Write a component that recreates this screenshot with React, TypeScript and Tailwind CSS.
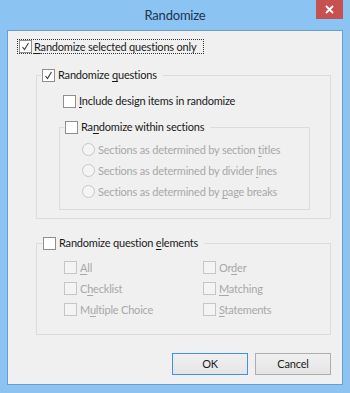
import React from "react";

const font = { fontFamily: 'Lato, "Noto Sans", sans-serif' };

const Check = () => (
  <svg width="9" height="9" viewBox="0 0 9 9" className="block">
    <path d="M1.5 5 L3.5 7.5 L7.5 1" fill="none" stroke="#3a3a3a" strokeWidth="1.1" />
  </svg>
);

const Box = ({ checked = false, disabled = false }: { checked?: boolean; disabled?: boolean }) => (
  <span
    className={
      disabled
        ? "flex h-[13px] w-[13px] shrink-0 items-center justify-center border border-[#c6c6c6] bg-[#f4f4f4]"
        : "flex h-[13px] w-[13px] shrink-0 items-center justify-center border border-[#8f8f8f] bg-white"
    }
  >
    {checked && <Check />}
  </span>
);

const Radio = () => (
  <span className="h-[13px] w-[13px] shrink-0 rounded-full border border-[#c6c6c6] bg-[#f4f4f4]" />
);

// label text with one underlined mnemonic letter
const Label = ({ pre, key1, post, disabled }: { pre: string; key1: string; post: string; disabled?: boolean }) => (
  <span className={disabled ? "whitespace-nowrap text-[#a8a8a8]" : "whitespace-nowrap text-[#1a1a1a]"}>
    {pre}
    <span className="underline underline-offset-2">{key1}</span>
    {post}
  </span>
);

const Row = ({ children }: { children: React.ReactNode }) => (
  <div className="flex h-[21px] items-center gap-[3px]">{children}</div>
);

export default function App() {
  return (
    <div
      className="relative h-[393px] w-[350px] overflow-hidden bg-[#8bc3f3] text-[11px] leading-[14px] tracking-[-0.2px]"
      style={font}
    >
      {/* title bar */}
      <div className="relative flex h-[30px] items-center justify-center">
        <span className="text-[13px] tracking-[-0.2px] text-[#1d3450]">Randomize</span>
        <div className="absolute right-[7px] top-0 flex h-[19px] w-[27px] items-center justify-center bg-[#c75050]">
          <svg width="9" height="9" viewBox="0 0 9 9">
            <path d="M1 1 L8 8 M8 1 L1 8" stroke="white" strokeWidth="1.8" />
          </svg>
        </div>
      </div>

      {/* client area */}
      <div className="mx-[7px] flex h-[355px] flex-col border border-[#6d9dcc] bg-[#f0f0f0] pt-[8px]">
        <div className="ml-[9px] flex h-[15px] w-fit items-center gap-[2px] border border-dotted border-[#333] pl-[1px] pr-[7px]">
          <Box checked />
          <Label pre="" key1="R" post="andomize selected questions only" />
        </div>

        <fieldset className="ml-[28px] mr-[11px] mt-[14px] border border-[#dcdcdc] pb-[8px]">
          <legend className="ml-[4px] flex items-center gap-[3px] pl-[1px] pr-[6px]">
            <Box checked />
            <Label pre="Randomize " key1="q" post="uestions" />
          </legend>
          <div className="ml-[26px] mt-[9px] flex h-[20px] items-center gap-[3px]">
            <Box />
            <Label pre="" key1="I" post="nclude design items in randomize" />
          </div>
          <fieldset className="ml-[22px] mr-[20px] mt-[9px] border border-[#dcdcdc] pb-[7px] pl-[22px] pt-[5px]">
            <legend className="-ml-[18px] flex items-center gap-[3px] pl-[1px] pr-[6px]">
              <Box />
              <Label pre="Ra" key1="n" post="domize within sections" />
            </legend>
            <Row>
              <Radio />
              <Label disabled pre="Sections as determined by section " key1="t" post="itles" />
            </Row>
            <Row>
              <Radio />
              <Label disabled pre="Sections as determined by divider " key1="l" post="ines" />
            </Row>
            <Row>
              <Radio />
              <Label disabled pre="Sections as determined by " key1="p" post="age breaks" />
            </Row>
          </fieldset>
        </fieldset>

        <fieldset className="ml-[28px] mr-[11px] mt-[17px] border border-[#dcdcdc] pb-[14px] pl-[27px] pt-[7px]">
          <legend className="-ml-[22px] flex items-center gap-[3px] pl-[1px] pr-[6px]">
            <Box />
            <Label pre="Randomize question " key1="e" post="lements" />
          </legend>
          <div className="grid grid-cols-[139px_1fr]">
            <Row>
              <Box disabled />
              <Label disabled pre="" key1="A" post="ll" />
            </Row>
            <Row>
              <Box disabled />
              <Label disabled pre="Or" key1="d" post="er" />
            </Row>
            <Row>
              <Box disabled />
              <Label disabled pre="C" key1="h" post="ecklist" />
            </Row>
            <Row>
              <Box disabled />
              <Label disabled pre="" key1="M" post="atching" />
            </Row>
            <Row>
              <Box disabled />
              <Label disabled pre="M" key1="u" post="ltiple Choice" />
            </Row>
            <Row>
              <Box disabled />
              <Label disabled pre="" key1="S" post="tatements" />
            </Row>
          </div>
        </fieldset>

        <div className="mr-[11px] mt-[18px] flex justify-end gap-[7px]">
          <button className="h-[22px] w-[76px] border border-[#3c94e6] bg-gradient-to-b from-[#f0f0f0] to-[#e5e5e5] text-[#1a1a1a]">
            OK
          </button>
          <button className="h-[22px] w-[76px] border border-[#adadad] bg-gradient-to-b from-[#f0f0f0] to-[#e5e5e5] text-[#1a1a1a]">
            Cancel
          </button>
        </div>
      </div>
    </div>
  );
}
